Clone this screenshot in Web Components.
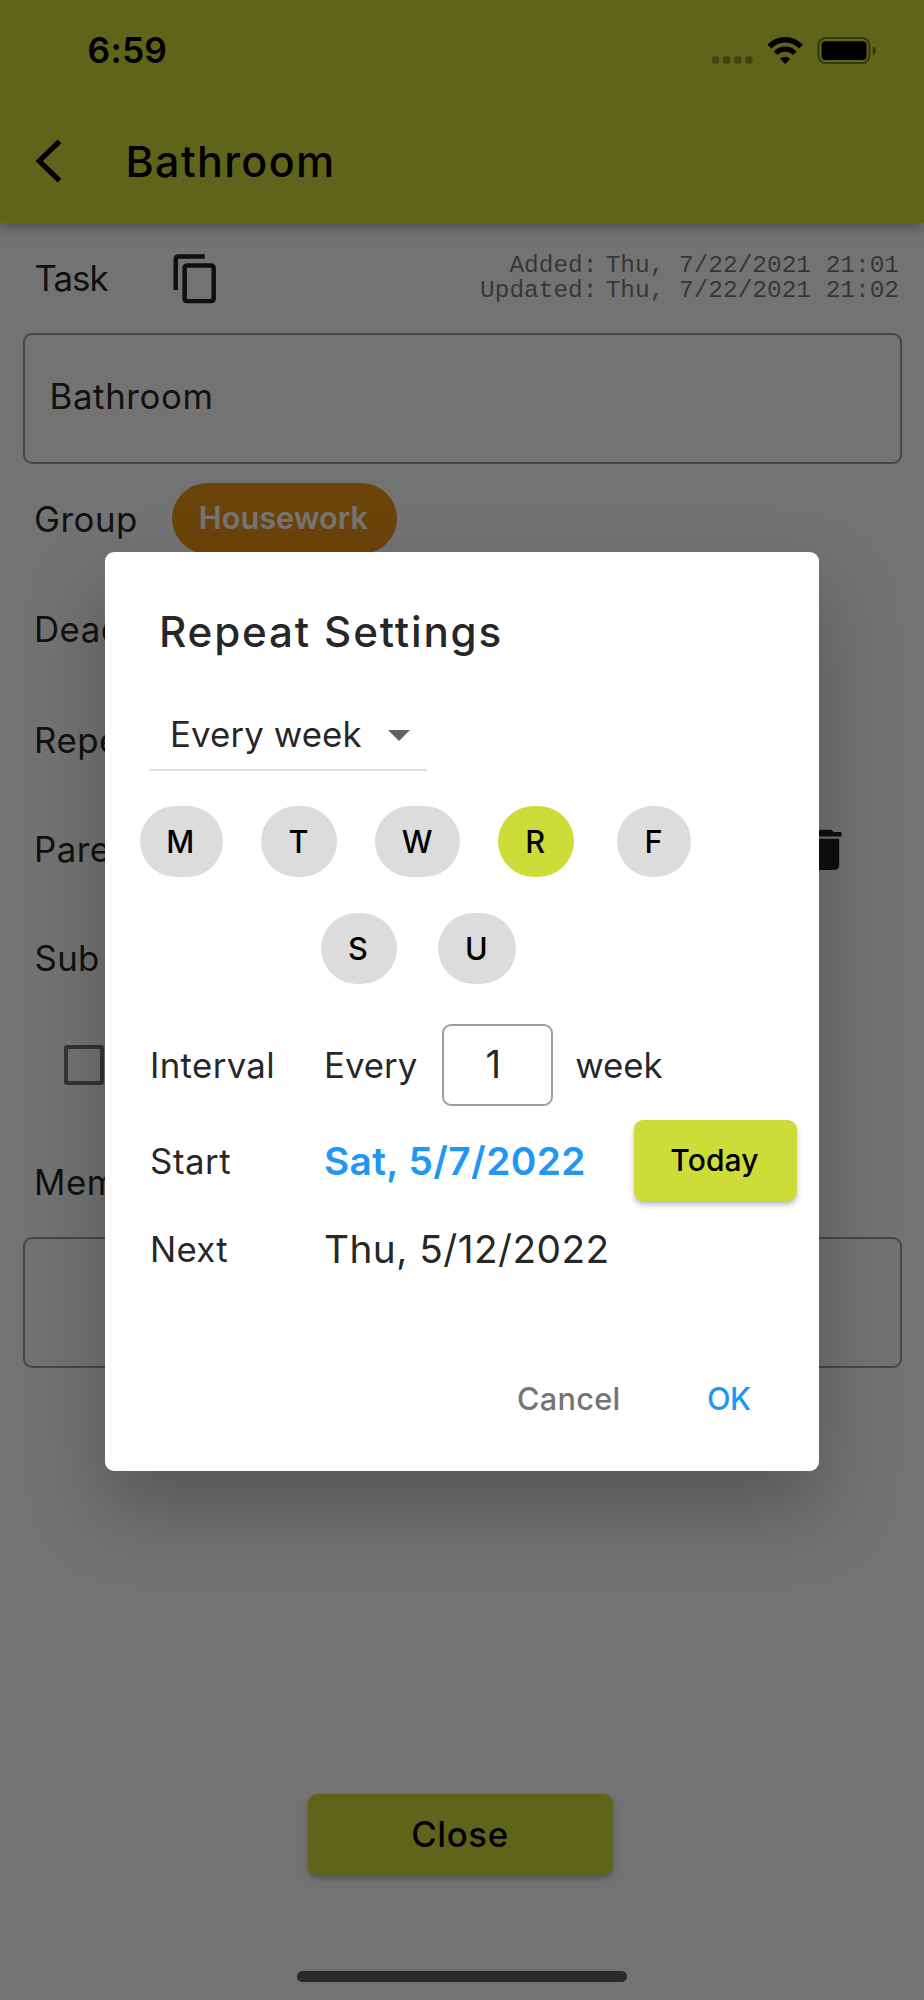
<!DOCTYPE html>
<html lang="en">
<head>
<meta charset="utf-8">
<title>Bathroom</title>
<style>
  html, body { margin: 0; padding: 0; }
  body { width: 924px; height: 2000px; overflow: hidden; background: #fafafa; font-family: Inter, "Liberation Sans", sans-serif; }
</style>
</head>
<body>
<task-app></task-app>
<script>
const define = (name, html) => {
  const template = document.createElement('template');
  template.innerHTML = html.trim();
  customElements.define(name, class extends HTMLElement {
    constructor() {
      super();
      this.attachShadow({ mode: 'open' }).append(template.content.cloneNode(true));
    }
  });
};

/* Single-line label; --s size, --w weight, --ls tracking, --c colour, --m margin */
define('ui-text', `
<style>
  :host { display: block; flex: none; white-space: pre; line-height: 44px;
    font-size: var(--s, 34.8px); font-weight: var(--w, 400); letter-spacing: var(--ls, .5px);
    color: var(--c, rgba(0,0,0,.87)); margin: var(--m, 0); }
</style><slot></slot>`);

define('status-bar', `
<style>
  :host { display: flex; align-items: center; height: 101px; box-sizing: border-box; padding: 0 48px 0 87.6px; }
  ui-text { margin-right: auto; }
  svg { display: block; flex: none; }
</style>
<ui-text style="--s:35.4px;--w:600;--ls:.2px;--c:#000;--m:1px auto 0 0">6:59</ui-text>
<svg width="166" height="30" viewBox="0 0 166 30">
  <g fill="#000" opacity=".3">
    <rect x="2" y="20.3" width="7.4" height="7.4" rx="2.2"/><rect x="13" y="20.3" width="7.4" height="7.4" rx="2.2"/>
    <rect x="24" y="20.3" width="7.4" height="7.4" rx="2.2"/><rect x="35.2" y="20.3" width="7.4" height="7.4" rx="2.2"/>
  </g>
  <g fill="none" stroke="#000">
    <path d="M59.4 10.6 A21.6 21.6 0 0 1 91 10.6" stroke-width="5.4"/>
    <path d="M65.8 17.2 A12.7 12.7 0 0 1 84.6 17.2" stroke-width="5.2"/>
  </g>
  <path d="M70.1 22.8 Q75.2 18.6 80.3 22.8 L75.2 28 Z" fill="#000"/>
  <rect x="108.4" y="2.1" width="51" height="25" rx="7.4" fill="none" stroke="#000" stroke-opacity=".45" stroke-width="2"/>
  <rect x="111.6" y="5.3" width="45" height="18.6" rx="4" fill="#000"/>
  <path d="M162.8 10.2 Q165.8 11.4 165.8 14.6 Q165.8 17.8 162.8 19.2 Z" fill="#000" opacity=".5"/>
</svg>`);

define('app-bar', `
<style>
  :host { display: flex; flex-direction: column; height: 223px; background: #cddc39; position: relative;
    box-shadow: 0 6px 12px -1px rgba(0,0,0,.32); }
  .bar { flex: 1; display: flex; align-items: center; padding: 0 0 2px 33px; }
  svg { flex: none; display: block; }
</style>
<status-bar></status-bar>
<div class="bar">
  <svg width="32" height="48" viewBox="0 0 32 48"><path d="M26.5 4.3 L6.2 24 L26.5 43.7" fill="none" stroke="#000" stroke-width="5.2"/></svg>
  <ui-text style="--s:43px;--w:500;--ls:1.36px;--c:#000;--m:0 0 1px 60.5px">Bathroom</ui-text>
</div>`);

define('text-field', `
<style>
  :host { display: flex; align-items: center; box-sizing: border-box; height: 131px; margin: 0 22.5px 0 22.5px;
    border: 2px solid rgba(0,0,0,.38); border-radius: 9px; padding: 0 0 6px 25px; }
</style><slot></slot>`);

define('form-row', `
<style>
  :host { display: flex; align-items: center; box-sizing: border-box; height: var(--h, 110px); padding-left: 34px; }
</style><slot></slot>`);

define('group-chip', `
<style>
  :host { display: flex; align-items: center; box-sizing: border-box; height: 71px; width: 225px; padding: 0 0 1px 27px;
    border-radius: 35.5px; background: #e99516; }
</style><slot></slot>`);

/* Creation and modification stamps, one row per stamp */
define('time-stamps', `
<style>
  :host { display: grid; grid-template-columns: auto auto; grid-auto-rows: 24.6px; column-gap: 8.3px; justify-items: end;
    margin: 1px 25px 0 auto; font: 24.45px/24.6px "Liberation Mono", monospace; color: rgba(0,0,0,.54); white-space: pre; }
</style><span>Added:</span><span>Thu, 7/22/2021 21:01</span><span>Updated:</span><span>Thu, 7/22/2021 21:02</span>`);

define('raised-button', `
<style>
  :host { display: flex; align-items: center; justify-content: center; box-sizing: border-box; flex: none; background: #cddc39;
    border-radius: 9px; box-shadow: 0 4px 6px -1px rgba(0,0,0,.32); }
</style><slot></slot>`);

define('task-page', `
<style>
  :host { display: flex; flex-direction: column; height: 2000px; }
  svg { display: block; flex: none; }
  .icon { fill: rgba(0,0,0,.87); }
  .box { width: 40px; height: 40px; box-sizing: border-box; border: 4.4px solid rgba(0,0,0,.54); border-radius: 3px; margin-left: 30px; }
  footer { margin-top: auto; height: 206px; display: flex; flex-direction: column; align-items: center; }
  raised-button { width: 305px; height: 81px; margin-right: 4px; }
</style>
<app-bar></app-bar>
<form-row>
  <ui-text style="--ls:-.94px;--m:0 0 0 .5px">Task</ui-text>
  <svg class="icon" width="53.6" height="53.6" viewBox="0 0 24 24" style="margin:1px 0 0 61.5px"><path d="M16 1H4c-1.1 0-2 .9-2 2v14h2V3h12V1zm3 4H8c-1.1 0-2 .9-2 2v14c0 1.1.9 2 2 2h11c1.1 0 2-.9 2-2V7c0-1.1-.9-2-2-2zm0 16H8V7h11v14z"/></svg>
  <time-stamps></time-stamps>
</form-row>
<text-field><ui-text style="--ls:.65px">Bathroom</ui-text></text-field>
<form-row style="--h:109px">
  <ui-text style="--ls:.52px">Group</ui-text>
  <group-chip style="margin-left:34px"><ui-text style="--s:30.7px;--w:600;--ls:0px;--c:#fff">Housework</ui-text></group-chip>
</form-row>
<form-row style="--h:112px"><ui-text>Deadline</ui-text></form-row>
<form-row style="--h:109px"><ui-text>Repeat</ui-text></form-row>
<form-row>
  <ui-text>Parent</ui-text>
  <svg class="icon" width="53.6" height="53.6" viewBox="0 0 24 24" style="margin:2px 71.5px 0 auto"><path d="M6 19c0 1.1.9 2 2 2h8c1.1 0 2-.9 2-2V7H6v12zM19 4h-3.5l-1-1h-5l-1 1H5v2h14V4z"/></svg>
</form-row>
<form-row style="--h:109px"><ui-text style="--ls:.3px;--m:0 0 1px .5px">Sub tasks</ui-text></form-row>
<form-row style="--h:103px"><div class="box"></div></form-row>
<form-row style="--h:121px;padding-top:10px"><ui-text>Memo</ui-text></form-row>
<text-field></text-field>
<footer>
  <raised-button><ui-text style="--w:500;--ls:.61px;--c:#000;--m:0 0 1px">Close</ui-text></raised-button>
</footer>`);

define('drop-down', `
<style>
  :host { display: flex; align-items: center; box-sizing: border-box; width: 277px; height: 72px;
    border-bottom: 2px solid #dedede; padding-left: 20px; }
  svg { flex: none; display: block; margin: 4px 0 0 26px; }
</style>
<ui-text style="--ls:.11px"><slot></slot></ui-text>
<svg width="22" height="11" viewBox="0 0 22 11"><path d="M0 0H22L11 11Z" fill="#616161"/></svg>`);

define('day-chip', `
<style>
  :host { display: flex; align-items: center; justify-content: center; height: 71px; border-radius: 35.5px;
    background: #dcdcdc; flex: none; }
  :host([selected]) { background: #cddc39; }
</style>
<ui-text style="--s:30.7px;--w:500;--ls:0px;--c:#000;--m:0 1.5px 0 0"><slot></slot></ui-text>`);

define('repeat-dialog', `
<style>
  :host { display: flex; flex-direction: column; box-sizing: border-box; width: 714px; height: 919.5px; background: #fff; border-radius: 9px;
    box-shadow: 0 37px 76px rgba(0,0,0,.25); }
  .row { display: flex; align-items: center; flex: none; padding-left: 44px; box-sizing: border-box; }
  .label { width: 174px; box-sizing: border-box; }
  .count { display: flex; align-items: center; justify-content: center; box-sizing: border-box; width: 111px; height: 82px;
    border: 2px solid rgba(0,0,0,.38); border-radius: 9px; padding: 0 8px 3px 0; margin: 0 22.5px 0 24.5px; }
  raised-button { width: 163px; height: 80.5px; margin-left: auto; }
</style>
<div class="row" style="height:160px;padding-left:54px"><ui-text style="--s:42.2px;--w:500;--ls:1.82px">Repeat Settings</ui-text></div>
<div class="row" style="height:59px;align-items:flex-end;padding-left:45px"><drop-down>Every week</drop-down></div>
<div class="row" style="height:71px;margin-top:35.7px;padding-left:34.6px">
  <day-chip style="width:83px">M</day-chip>
  <day-chip style="width:76px;margin-left:38.7px">T</day-chip>
  <day-chip style="width:85px;margin-left:38px">W</day-chip>
  <day-chip style="width:76px;margin-left:37.7px" selected>R</day-chip>
  <day-chip style="width:74px;margin-left:43.3px">F</day-chip>
</div>
<div class="row" style="height:71px;margin-top:36.3px;padding-left:215.6px">
  <day-chip style="width:76px">S</day-chip>
  <day-chip style="width:78.5px;margin-left:41.2px">U</day-chip>
</div>
<div class="row" style="height:82px;margin-top:40px">
  <ui-text class="label" style="--ls:.35px;--m:0 -1px 0 1px">Interval</ui-text>
  <ui-text style="--ls:0px;--m:0 0 0 1px">Every</ui-text>
  <div class="count"><ui-text style="--s:38.5px;--ls:0px">1</ui-text></div>
  <ui-text style="--ls:-.1px">week</ui-text>
</div>
<div class="row" style="height:80.5px;margin-top:14px;padding-right:22px">
  <ui-text class="label" style="--ls:.56px;--m:0 0 0 1px">Start</ui-text>
  <ui-text style="--s:38.8px;--w:600;--ls:.38px;--c:#2196f3">Sat, 5/7/2022</ui-text>
  <raised-button><ui-text style="--s:30px;--w:500;--ls:.13px;--c:#000;--m:0 2px 1px 0">Today</ui-text></raised-button>
</div>
<div class="row" style="height:60px;margin-top:18px">
  <ui-text class="label" style="--ls:.3px;--m:0 -1px 0 1px">Next</ui-text>
  <ui-text style="--s:38.8px;--ls:.44px;--m:0 0 0 1px">Thu, 5/12/2022</ui-text>
</div>
<div class="row" style="height:60px;margin-top:90px;padding-left:412px">
  <ui-text style="--s:30.7px;--w:500;--ls:.27px;--c:#757575">Cancel</ui-text>
  <ui-text style="--s:30.7px;--w:500;--ls:-.5px;--c:#2196f3;--m:0 0 0 86.5px">OK</ui-text>
</div>`);

/* The page with a scrim, the modal dialog and the home indicator stacked over it */
define('task-app', `
<style>
  :host { display: block; position: relative; width: 924px; height: 2000px; overflow: hidden; }
  .scrim { position: absolute; inset: 0; background: rgba(0,0,0,.54); display: flex; flex-direction: column; align-items: flex-start; }
  repeat-dialog { margin: 551.5px 0 0 105px; }
  .home { width: 330px; height: 11px; border-radius: 5.5px; background: #2a2a2a; margin: auto 0 18px 297px; }
</style>
<task-page></task-page>
<div class="scrim"><repeat-dialog></repeat-dialog><div class="home"></div></div>`);
</script>
</body>
</html>
